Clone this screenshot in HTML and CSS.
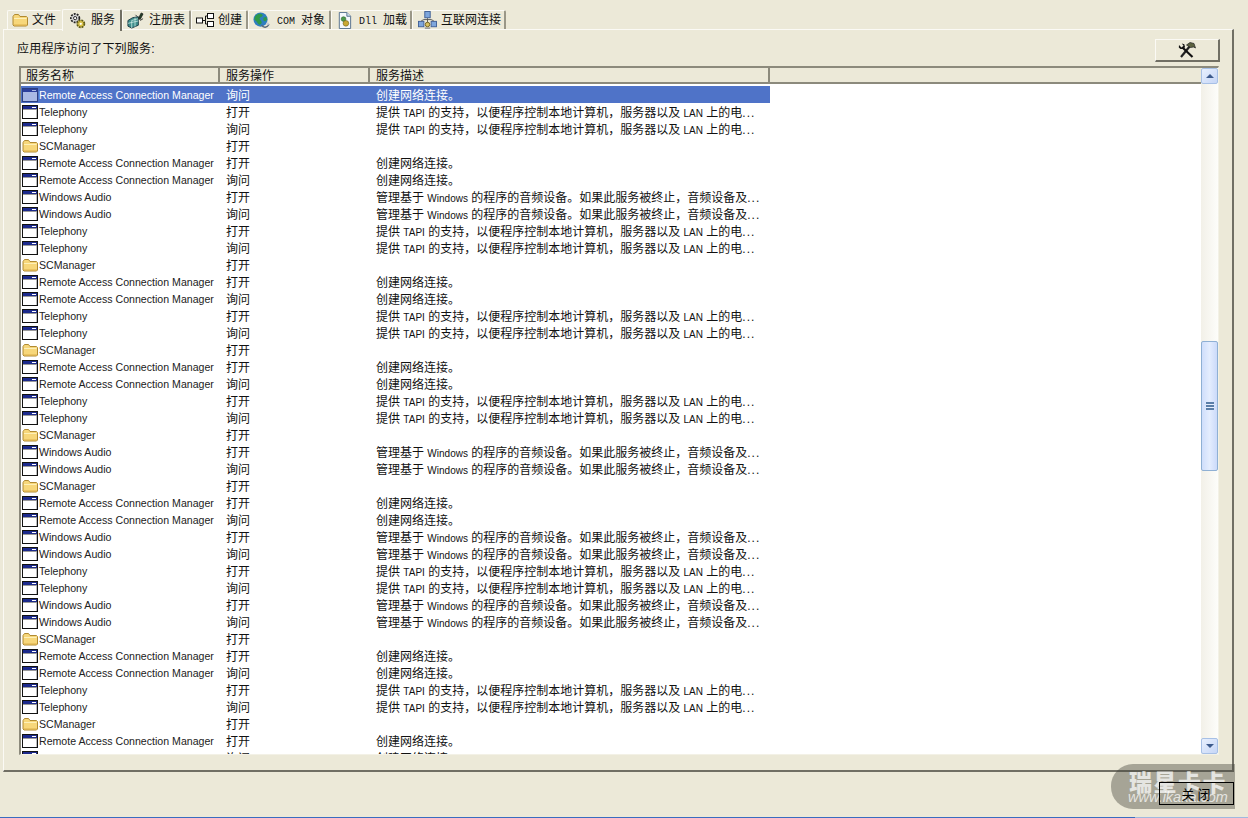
FILE: index.html
```html
<!DOCTYPE html>
<html lang="zh-CN">
<head>
<meta charset="utf-8">
<title>服务</title>
<link rel="stylesheet" href="styles.css">
</head>
<body>
<svg class="defs" width="0" height="0">
  <defs>
    <symbol id="win" viewBox="0 0 16 14">
      <rect x="0.5" y="0.5" width="15" height="13" fill="#fff" stroke="#111"/>
      <rect x="1" y="1" width="14" height="3" fill="#1c2a8c"/>
      <rect x="10" y="2" width="4" height="1" fill="#fff"/>
      <rect x="1" y="4" width="14" height="1" fill="#9a9a9a"/>
      <rect x="14" y="5" width="1" height="8" fill="#bbb"/>
    </symbol>
    <symbol id="winsel" viewBox="0 0 16 14">
      <rect x="0.5" y="0.5" width="15" height="13" fill="#a9b9e4" stroke="#2c3f80"/>
      <rect x="1" y="1" width="14" height="3" fill="#2c3f9c"/>
      <rect x="10" y="2" width="4" height="1" fill="#a9b9e4"/>
    </symbol>
    <symbol id="folder" viewBox="0 0 16 14">
      <path d="M1 3.500 2.500 1.500H6.500L8 3.500H14.500L15.500 4.500V12L14.500 13H2L1 12Z" fill="#f7d77a" stroke="#b08a32"/>
      <path d="M2 5H14.500V6H2Z" fill="#fdf0b8"/>
      <path d="M2 11.500H15V12.500H2Z" fill="#dcae4a"/>
    </symbol>
    <symbol id="gears" viewBox="0 0 18 18">
      <circle cx="6.500" cy="6.500" r="4.500" fill="#d4d4d4" stroke="#222" stroke-width="1.800" stroke-dasharray="2 1.200"/>
      <circle cx="6.500" cy="6.500" r="1.700" fill="#fff" stroke="#222"/>
      <circle cx="12.500" cy="12.500" r="3.800" fill="#d9c24a" stroke="#5d5a18" stroke-width="1.800" stroke-dasharray="2 1"/>
      <circle cx="12.500" cy="12.500" r="1.200" fill="#fff"/>
    </symbol>
    <symbol id="cube" viewBox="0 0 18 18">
      <path d="M1 9 6 6 12 5 12 14 5 17 1 15Z" fill="#3f8f8c" stroke="#1c3c48"/>
      <path d="M5 9V17M8.500 6V15.500M1 12 12 9.500M5 9 12 7" stroke="#cfeee8" stroke-width=".8" fill="none"/>
      <path d="M12 7 15 1 17 2 14 8Z" fill="#23402c" stroke="#111" stroke-width=".7"/>
      <path d="M9 3 11 5M14 9 17 7" stroke="#333"/>
    </symbol>
    <symbol id="nodes" viewBox="0 0 18 14">
      <rect x="0.500" y="5" width="6" height="5" fill="#fff" stroke="#111"/>
      <rect x="11.500" y="0.500" width="6" height="5" fill="#fff" stroke="#111"/>
      <rect x="11.500" y="8.500" width="6" height="5" fill="#fff" stroke="#111"/>
      <path d="M6.500 7.500H9.500V3H11.500M9.500 7.500V11H11.500" fill="none" stroke="#111"/>
    </symbol>
    <symbol id="globe" viewBox="0 0 18 18">
      <circle cx="8" cy="8" r="7.500" fill="#2f7fc0"/>
      <path d="M3 3.500C6 1 9 1.500 10 3 11 5 7 5 7 7 7 9 10 9 9 12 8 14 6 14 5 12 4 9 1 9 1.500 6.500Z" fill="#2f9a48"/>
      <path d="M11 6 14 5 15 8 13 10 11 9Z" fill="#2f9a48"/>
      <path d="M9 14C11 17 15 17 17 13" fill="none" stroke="#5a6a7a" stroke-width="1.500"/>
      <circle cx="15.500" cy="12.500" r="1.500" fill="#c8ccd4"/>
    </symbol>
    <symbol id="dll" viewBox="0 0 16 18">
      <path d="M2.500 0.500H10.500L14.500 4.500V17.500H2.500Z" fill="#f4f8fc" stroke="#54708c"/>
      <path d="M10.500 0.500V4.500H14.500" fill="#cfe0ee" stroke="#54708c"/>
      <circle cx="7" cy="7.500" r="2.500" fill="#4c9a4c" stroke="#2a5e2a" stroke-width=".6"/>
      <circle cx="9.500" cy="12" r="3" fill="#c8a832" stroke="#6b5a18" stroke-width=".6"/>
    </symbol>
    <symbol id="net" viewBox="0 0 22 20">
      <rect x="8" y="0.500" width="6" height="7" fill="#7ea6dc" stroke="#3c5c94"/>
      <rect x="1" y="11.500" width="6" height="6" fill="#7ea6dc" stroke="#3c5c94"/>
      <rect x="15" y="11.500" width="6" height="6" fill="#7ea6dc" stroke="#3c5c94"/>
      <path d="M11 8V13M4 11 7 9.500H15L18 11" fill="none" stroke="#555"/>
      <circle cx="11" cy="15" r="2.500" fill="#d8c060" stroke="#6b5a18"/>
      <path d="M8 19H14" stroke="#888" stroke-width="1.500"/>
    </symbol>
    <symbol id="tools" viewBox="0 0 18 16">
      <path d="M3 15 12 4" stroke="#222" stroke-width="2.200" fill="none"/>
      <path d="M8.500 3 12 0.500 16 1.500 17.500 6 15.500 5 12.500 5.500Z" fill="#5c6240" stroke="#222" stroke-width=".7"/>
      <path d="M14.500 15 4.500 5.500" stroke="#111" stroke-width="2.200" fill="none"/>
      <path d="M1 3 3.500 5.500 5.500 3.800 3.800 1.500 6.300 2.200 7 5 5.500 7 2.500 7 0.800 5.500Z" fill="#111"/>
    </symbol>
  </defs>
</svg>

<div class="tabs">
  <div class="tab t1"><svg class="ti ti-f"><use href="#folder"/></svg><span>文件</span></div>
  <div class="tab active"><svg class="ti ti-g"><use href="#gears"/></svg><span>服务</span></div>
  <div class="tab t3"><svg class="ti ti-g"><use href="#cube"/></svg><span>注册表</span></div>
  <div class="tab t4"><svg class="ti ti-n"><use href="#nodes"/></svg><span>创建</span></div>
  <div class="tab t5"><svg class="ti ti-g"><use href="#globe"/></svg><span><i class="mono">COM</i>对象</span></div>
  <div class="tab t6"><svg class="ti ti-g"><use href="#dll"/></svg><span><i class="mono">Dll</i>加载</span></div>
  <div class="tab t7"><svg class="ti ti-w"><use href="#net"/></svg><span>互联网连接</span></div>
</div>

<main class="panel">
  <div class="panel-head">
    <p class="caption">应用程序访问了下列服务:</p>
    <button class="tool-btn" type="button"><svg class="tool-ic"><use href="#tools"/></svg></button>
  </div>
  <section class="list">
    <div class="list-main">
      <div class="head">
        <div class="hc c1">服务名称</div>
        <div class="hc c2">服务操作</div>
        <div class="hc c3">服务描述</div>
      </div>
      <div class="rows">
        <div class="row sel"><div class="c1 name"><svg class="ri"><use href="#winsel"/></svg>Remote Access Connection Manager</div><div class="c2">询问</div><div class="c3">创建网络连接。</div></div>
        <div class="row"><div class="c1 name"><svg class="ri"><use href="#win"/></svg>Telephony</div><div class="c2">打开</div><div class="c3">提供 <span class="lat">TAPI</span> 的支持，以便程序控制本地计算机，服务器以及 <span class="lat">LAN</span> 上的电<span class="ell">...</span></div></div>
        <div class="row"><div class="c1 name"><svg class="ri"><use href="#win"/></svg>Telephony</div><div class="c2">询问</div><div class="c3">提供 <span class="lat">TAPI</span> 的支持，以便程序控制本地计算机，服务器以及 <span class="lat">LAN</span> 上的电<span class="ell">...</span></div></div>
        <div class="row"><div class="c1 name"><svg class="ri"><use href="#folder"/></svg>SCManager</div><div class="c2">打开</div><div class="c3"></div></div>
        <div class="row"><div class="c1 name"><svg class="ri"><use href="#win"/></svg>Remote Access Connection Manager</div><div class="c2">打开</div><div class="c3">创建网络连接。</div></div>
        <div class="row"><div class="c1 name"><svg class="ri"><use href="#win"/></svg>Remote Access Connection Manager</div><div class="c2">询问</div><div class="c3">创建网络连接。</div></div>
        <div class="row"><div class="c1 name"><svg class="ri"><use href="#win"/></svg>Windows Audio</div><div class="c2">打开</div><div class="c3">管理基于 <span class="lat">Windows</span> 的程序的音频设备。如果此服务被终止，音频设备及<span class="ell">...</span></div></div>
        <div class="row"><div class="c1 name"><svg class="ri"><use href="#win"/></svg>Windows Audio</div><div class="c2">询问</div><div class="c3">管理基于 <span class="lat">Windows</span> 的程序的音频设备。如果此服务被终止，音频设备及<span class="ell">...</span></div></div>
        <div class="row"><div class="c1 name"><svg class="ri"><use href="#win"/></svg>Telephony</div><div class="c2">打开</div><div class="c3">提供 <span class="lat">TAPI</span> 的支持，以便程序控制本地计算机，服务器以及 <span class="lat">LAN</span> 上的电<span class="ell">...</span></div></div>
        <div class="row"><div class="c1 name"><svg class="ri"><use href="#win"/></svg>Telephony</div><div class="c2">询问</div><div class="c3">提供 <span class="lat">TAPI</span> 的支持，以便程序控制本地计算机，服务器以及 <span class="lat">LAN</span> 上的电<span class="ell">...</span></div></div>
        <div class="row"><div class="c1 name"><svg class="ri"><use href="#folder"/></svg>SCManager</div><div class="c2">打开</div><div class="c3"></div></div>
        <div class="row"><div class="c1 name"><svg class="ri"><use href="#win"/></svg>Remote Access Connection Manager</div><div class="c2">打开</div><div class="c3">创建网络连接。</div></div>
        <div class="row"><div class="c1 name"><svg class="ri"><use href="#win"/></svg>Remote Access Connection Manager</div><div class="c2">询问</div><div class="c3">创建网络连接。</div></div>
        <div class="row"><div class="c1 name"><svg class="ri"><use href="#win"/></svg>Telephony</div><div class="c2">打开</div><div class="c3">提供 <span class="lat">TAPI</span> 的支持，以便程序控制本地计算机，服务器以及 <span class="lat">LAN</span> 上的电<span class="ell">...</span></div></div>
        <div class="row"><div class="c1 name"><svg class="ri"><use href="#win"/></svg>Telephony</div><div class="c2">询问</div><div class="c3">提供 <span class="lat">TAPI</span> 的支持，以便程序控制本地计算机，服务器以及 <span class="lat">LAN</span> 上的电<span class="ell">...</span></div></div>
        <div class="row"><div class="c1 name"><svg class="ri"><use href="#folder"/></svg>SCManager</div><div class="c2">打开</div><div class="c3"></div></div>
        <div class="row"><div class="c1 name"><svg class="ri"><use href="#win"/></svg>Remote Access Connection Manager</div><div class="c2">打开</div><div class="c3">创建网络连接。</div></div>
        <div class="row"><div class="c1 name"><svg class="ri"><use href="#win"/></svg>Remote Access Connection Manager</div><div class="c2">询问</div><div class="c3">创建网络连接。</div></div>
        <div class="row"><div class="c1 name"><svg class="ri"><use href="#win"/></svg>Telephony</div><div class="c2">打开</div><div class="c3">提供 <span class="lat">TAPI</span> 的支持，以便程序控制本地计算机，服务器以及 <span class="lat">LAN</span> 上的电<span class="ell">...</span></div></div>
        <div class="row"><div class="c1 name"><svg class="ri"><use href="#win"/></svg>Telephony</div><div class="c2">询问</div><div class="c3">提供 <span class="lat">TAPI</span> 的支持，以便程序控制本地计算机，服务器以及 <span class="lat">LAN</span> 上的电<span class="ell">...</span></div></div>
        <div class="row"><div class="c1 name"><svg class="ri"><use href="#folder"/></svg>SCManager</div><div class="c2">打开</div><div class="c3"></div></div>
        <div class="row"><div class="c1 name"><svg class="ri"><use href="#win"/></svg>Windows Audio</div><div class="c2">打开</div><div class="c3">管理基于 <span class="lat">Windows</span> 的程序的音频设备。如果此服务被终止，音频设备及<span class="ell">...</span></div></div>
        <div class="row"><div class="c1 name"><svg class="ri"><use href="#win"/></svg>Windows Audio</div><div class="c2">询问</div><div class="c3">管理基于 <span class="lat">Windows</span> 的程序的音频设备。如果此服务被终止，音频设备及<span class="ell">...</span></div></div>
        <div class="row"><div class="c1 name"><svg class="ri"><use href="#folder"/></svg>SCManager</div><div class="c2">打开</div><div class="c3"></div></div>
        <div class="row"><div class="c1 name"><svg class="ri"><use href="#win"/></svg>Remote Access Connection Manager</div><div class="c2">打开</div><div class="c3">创建网络连接。</div></div>
        <div class="row"><div class="c1 name"><svg class="ri"><use href="#win"/></svg>Remote Access Connection Manager</div><div class="c2">询问</div><div class="c3">创建网络连接。</div></div>
        <div class="row"><div class="c1 name"><svg class="ri"><use href="#win"/></svg>Windows Audio</div><div class="c2">打开</div><div class="c3">管理基于 <span class="lat">Windows</span> 的程序的音频设备。如果此服务被终止，音频设备及<span class="ell">...</span></div></div>
        <div class="row"><div class="c1 name"><svg class="ri"><use href="#win"/></svg>Windows Audio</div><div class="c2">询问</div><div class="c3">管理基于 <span class="lat">Windows</span> 的程序的音频设备。如果此服务被终止，音频设备及<span class="ell">...</span></div></div>
        <div class="row"><div class="c1 name"><svg class="ri"><use href="#win"/></svg>Telephony</div><div class="c2">打开</div><div class="c3">提供 <span class="lat">TAPI</span> 的支持，以便程序控制本地计算机，服务器以及 <span class="lat">LAN</span> 上的电<span class="ell">...</span></div></div>
        <div class="row"><div class="c1 name"><svg class="ri"><use href="#win"/></svg>Telephony</div><div class="c2">询问</div><div class="c3">提供 <span class="lat">TAPI</span> 的支持，以便程序控制本地计算机，服务器以及 <span class="lat">LAN</span> 上的电<span class="ell">...</span></div></div>
        <div class="row"><div class="c1 name"><svg class="ri"><use href="#win"/></svg>Windows Audio</div><div class="c2">打开</div><div class="c3">管理基于 <span class="lat">Windows</span> 的程序的音频设备。如果此服务被终止，音频设备及<span class="ell">...</span></div></div>
        <div class="row"><div class="c1 name"><svg class="ri"><use href="#win"/></svg>Windows Audio</div><div class="c2">询问</div><div class="c3">管理基于 <span class="lat">Windows</span> 的程序的音频设备。如果此服务被终止，音频设备及<span class="ell">...</span></div></div>
        <div class="row"><div class="c1 name"><svg class="ri"><use href="#folder"/></svg>SCManager</div><div class="c2">打开</div><div class="c3"></div></div>
        <div class="row"><div class="c1 name"><svg class="ri"><use href="#win"/></svg>Remote Access Connection Manager</div><div class="c2">打开</div><div class="c3">创建网络连接。</div></div>
        <div class="row"><div class="c1 name"><svg class="ri"><use href="#win"/></svg>Remote Access Connection Manager</div><div class="c2">询问</div><div class="c3">创建网络连接。</div></div>
        <div class="row"><div class="c1 name"><svg class="ri"><use href="#win"/></svg>Telephony</div><div class="c2">打开</div><div class="c3">提供 <span class="lat">TAPI</span> 的支持，以便程序控制本地计算机，服务器以及 <span class="lat">LAN</span> 上的电<span class="ell">...</span></div></div>
        <div class="row"><div class="c1 name"><svg class="ri"><use href="#win"/></svg>Telephony</div><div class="c2">询问</div><div class="c3">提供 <span class="lat">TAPI</span> 的支持，以便程序控制本地计算机，服务器以及 <span class="lat">LAN</span> 上的电<span class="ell">...</span></div></div>
        <div class="row"><div class="c1 name"><svg class="ri"><use href="#folder"/></svg>SCManager</div><div class="c2">打开</div><div class="c3"></div></div>
        <div class="row"><div class="c1 name"><svg class="ri"><use href="#win"/></svg>Remote Access Connection Manager</div><div class="c2">打开</div><div class="c3">创建网络连接。</div></div>
        <div class="row"><div class="c1 name"><svg class="ri"><use href="#win"/></svg>Remote Access Connection Manager</div><div class="c2">询问</div><div class="c3">创建网络连接。</div></div>
      </div>
    </div>
    <div class="scrollbar">
      <div class="sb-btn"><span class="arrow up"></span></div>
      <div class="sb-track">
        <div class="sb-thumb"><span class="grip"></span></div>
      </div>
      <div class="sb-btn"><span class="arrow down"></span></div>
    </div>
  </section>
</main>

<footer class="footer">
  <button class="close-btn" type="button">关闭</button>
</footer>
<div class="taskbar"></div>

<div class="watermark">
  <div class="wm-cn">瑞星卡卡</div>
  <div class="wm-en">www.ikaka.com</div>
</div>
</body>
</html>
```
FILE: styles.css
```css
* { box-sizing: border-box; }

html, body {
  margin: 0;
  height: 818px;
  overflow: hidden;
}

body {
  position: relative;
  display: flex;
  flex-direction: column;
  background: #ece9d8;
  color: #111;
  font: 11px/17px "Liberation Sans", "Noto Sans CJK SC", sans-serif;
}

.defs { position: absolute; }

/* tabs */
.tabs {
  display: flex;
  align-items: flex-end;
  height: 30px;
  padding-left: 7px;
  flex: none;
  position: relative;
  z-index: 2;
}

.tab {
  display: flex;
  align-items: center;
  height: 19px;
  margin-bottom: 1px;
  padding-left: 4px;
  gap: 6px;
  font-size: 12px;
  white-space: nowrap;
  background: #ece9d8;
  border-top: 1px solid #fbfaf5;
  border-left: 1px solid #fbfaf5;
  border-right: 2px solid #9a9788;
  border-radius: 2px 2px 0 0;
}

.t1 { width: 55px; gap: 4px; border-right-color: #ece9d8; }
.active {
  width: 60px;
  height: 22px;
  margin-bottom: -1px;
  padding-left: 6px;
  border-right-color: #716f64;
  gap: 5px;
}
.t3 { width: 69px; gap: 5px; }
.t4 { width: 57px; gap: 4px; }
.t5 { width: 83px; gap: 7px; }
.t6 { width: 81px; }
.t7 { width: 94px; gap: 3px; }

.ti { flex: none; }
.ti-f { width: 16px; height: 14px; }
.ti-g { width: 17px; height: 17px; }
.ti-n { width: 18px; height: 14px; }
.ti-w { width: 21px; height: 18px; }

.mono {
  font: normal 10px "Liberation Mono", monospace;
  margin-right: 6px;
}

/* panel */
.panel {
  flex: none;
  width: 1231px;
  height: 743px;
  margin-left: 3px;
  margin-top: -1px;
  padding: 9px 12px 0 15px;
  border-top: 1px solid #fbfaf5;
  border-left: 1px solid #fbfaf5;
  border-right: 2px solid #716f64;
  border-bottom: 2px solid #716f64;
  display: flex;
  flex-direction: column;
}

.panel-head {
  display: flex;
  justify-content: space-between;
  align-items: flex-start;
  height: 27px;
  flex: none;
}

.caption {
  margin: 1px 0 0 -2px;
  font-size: 12px;
  line-height: 18px;
  letter-spacing: .2px;
}

.tool-btn {
  width: 65px;
  height: 23px;
  padding: 0;
  background: #ece9d8;
  border-top: 1px solid #fbfaf5;
  border-left: 1px solid #fbfaf5;
  border-right: 2px solid #716f64;
  border-bottom: 2px solid #716f64;
  display: flex;
  align-items: center;
  justify-content: center;
}

.tool-ic { width: 18px; height: 16px; }

/* list */
.list {
  flex: none;
  width: 1200px;
  height: 689px;
  display: flex;
  background: #fff;
  border-top: 2px solid #8c8a7c;
  border-left: 2px solid #8c8a7c;
  border-right: 1px solid #f3f1e6;
  border-bottom: 1px solid #f3f1e6;
}

.list-main {
  flex: 1;
  min-width: 0;
  overflow: hidden;
}

.head {
  display: flex;
  height: 16px;
  line-height: 16px;
  font-size: 12px;
  background: #ece9d8;
  border-bottom: 2px solid #8c8a7c;
}

.hc {
  height: 14px;
  border-right: 2px solid #8c8a7c;
  padding-left: 5px;
}

.c1 { width: 199px; flex: none; }
.c2 { width: 150px; flex: none; padding-left: 6px; }
.c3 { width: 400px; flex: none; padding-left: 6px; white-space: nowrap; overflow: hidden; }
.hc.c2, .hc.c3 { padding-left: 6px; }

.rows { padding-top: 2px; }

.row {
  display: flex;
  height: 17px;
  width: 749px;
  font-size: 12px;
  line-height: 17px;
  color: #111;
}

.row .c2, .row .c3 { padding-top: 2px; }

.name {
  display: flex;
  align-items: center;
  padding-left: 1px;
  padding-top: 1px;
  font-size: 10.6px;
  color: #222;
  white-space: nowrap;
}

.lat { font-size: 10px; }
.ell { letter-spacing: 1px; }

.ri {
  width: 16px;
  height: 14px;
  flex: none;
  margin-right: 1px;
}

.sel {
  background: #4f73c8;
  color: #fff;
}

.sel .name { color: #fff; }

/* scrollbar */
.scrollbar {
  flex: none;
  width: 17px;
  display: flex;
  flex-direction: column;
  background: linear-gradient(90deg, #f2f0e8, #fdfdfa);
}

.sb-btn {
  flex: none;
  height: 16px;
  display: flex;
  align-items: center;
  justify-content: center;
  background: linear-gradient(135deg, #e8f0fe, #c6d6f6);
  border: 1px solid #a7c0e6;
  border-radius: 2px;
}

.arrow {
  width: 0;
  height: 0;
  border-left: 4px solid transparent;
  border-right: 4px solid transparent;
}

.arrow.up { border-bottom: 4px solid #3c5a8c; }
.arrow.down { border-top: 4px solid #3c5a8c; }

.sb-track {
  flex: 1;
  padding-top: 257px;
}

.sb-thumb {
  height: 130px;
  display: flex;
  align-items: center;
  justify-content: center;
  background: linear-gradient(90deg, #cfdefb, #e4edfe 50%, #cbdafa);
  border: 1px solid #8fb0d4;
  border-radius: 2px;
}

.grip {
  width: 8px;
  height: 8px;
  background: repeating-linear-gradient(180deg, #5a7ea8 0 2px, #e6eefc 2px 3px);
}

/* footer */
.footer {
  flex: none;
  height: 45px;
  display: flex;
  justify-content: flex-end;
  align-items: flex-start;
  padding: 10px 14px 0 0;
}

.close-btn {
  position: relative;
  z-index: 6;
  width: 75px;
  height: 23px;
  padding: 0 0 0 2px;
  background: transparent;
  border: 1px solid #000;
  color: #000;
  font: 13px "Liberation Sans", "Noto Sans CJK SC", sans-serif;
  letter-spacing: 3px;
}

.taskbar {
  flex: none;
  height: 2px;
  background: linear-gradient(90deg, #3a6cc0 0 1135px, #9fb9e0 1135px);
}

/* watermark lying under the close button's text */
.watermark {
  position: absolute;
  left: 1111px;
  top: 764px;
  width: 124px;
  height: 45px;
  padding: 8px 0 0 18px;
  background: rgba(70, 70, 60, .42);
  border-radius: 22px 0 0 22px;
  color: rgba(255, 255, 255, .72);
  z-index: 5;
}

.wm-cn {
  font: 900 23px/18px "Noto Sans CJK SC", sans-serif;
  letter-spacing: 1.500px;
  white-space: nowrap;
}

.wm-en {
  margin-left: -1px;
  font: italic 14.500px/15px "Liberation Sans", sans-serif;
  white-space: nowrap;
}
```
